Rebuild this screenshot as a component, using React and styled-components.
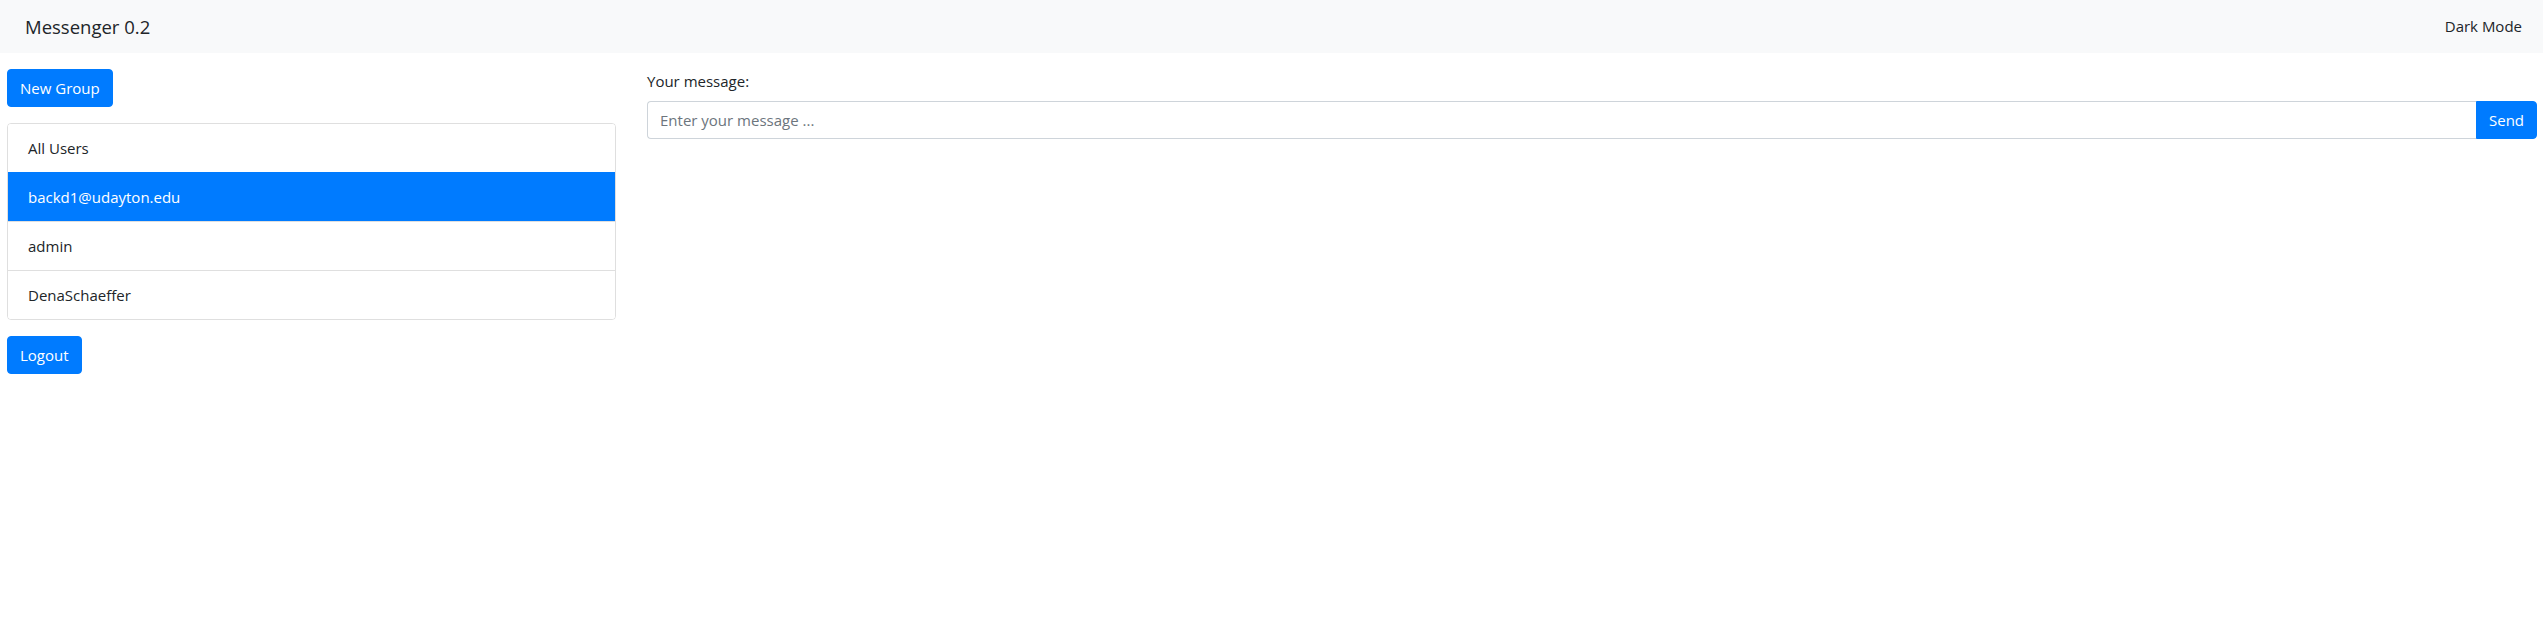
import React from 'react'
import styled, { createGlobalStyle } from 'styled-components'

const GlobalStyle = createGlobalStyle`
  body {
    margin: 0;
    font-family: 'Open Sans', 'Noto Sans', sans-serif;
    font-size: 16px;
    line-height: 1.5;
    color: #212529;
    background: #fff;
  }
  * {
    box-sizing: border-box;
  }
`

const users = ['All Users', 'backd1@udayton.edu', 'admin', 'DenaSchaeffer']

export default function App() {
  return (
    <>
      <GlobalStyle />
      <NavbarStyled>
        <BrandStyled>Messenger 0.2</BrandStyled>
        <NavLinkStyled>Dark Mode</NavLinkStyled>
      </NavbarStyled>
      <MainStyled>
        <SidebarStyled>
          <ButtonStyled>New Group</ButtonStyled>
          <ListStyled>
            {users.map((u) => (
              <ListItemStyled key={u} active={u === 'backd1@udayton.edu'}>
                {u}
              </ListItemStyled>
            ))}
          </ListStyled>
          <ButtonStyled>Logout</ButtonStyled>
        </SidebarStyled>
        <ChatStyled>
          <LabelStyled>Your message:</LabelStyled>
          <InputGroupStyled>
            <InputStyled placeholder="Enter your message ..." />
            <SendButtonStyled>Send</SendButtonStyled>
          </InputGroupStyled>
        </ChatStyled>
      </MainStyled>
    </>
  )
}

const NavbarStyled = styled.nav`
  display: flex;
  align-items: center;
  justify-content: space-between;
  height: 53px;
  padding: 0 21px 0 25px;
  background-color: #f8f9fa;
`

const BrandStyled = styled.span`
  font-size: 18.5px;
  color: #212529;
`

const NavLinkStyled = styled.span`
  font-size: 15px;
  color: #212529;
`

const MainStyled = styled.div`
  display: flex;
  gap: 31px;
  padding: 16px 6px 0 7px;
`

const SidebarStyled = styled.div`
  display: flex;
  flex-direction: column;
  align-items: flex-start;
  gap: 16px;
  width: 609px;
  flex-shrink: 0;
`

const ButtonStyled = styled.button`
  font-family: inherit;
  font-size: 15px;
  line-height: 24px;
  color: #fff;
  background-color: #007bff;
  border: 1px solid #007bff;
  border-radius: 4px;
  padding: 6px 12px;
  cursor: pointer;
`

const ListStyled = styled.div`
  display: flex;
  flex-direction: column;
  width: 100%;
  border: 1px solid rgba(0, 0, 0, 0.125);
  border-radius: 4px;
  overflow: hidden;
`

const ListItemStyled = styled.div`
  font-size: 15px;
  line-height: 24px;
  padding: 12px 20px;
  height: 49px;
  color: ${(p) => (p.active ? '#fff' : '#212529')};
  background-color: ${(p) => (p.active ? '#007bff' : '#fff')};
  border-top: 1px solid ${(p) => (p.active ? '#007bff' : 'rgba(0, 0, 0, 0.125)')};
  &:first-child {
    border-top: none;
    height: 48px;
  }
`

const ChatStyled = styled.div`
  flex: 1;
  display: flex;
  flex-direction: column;
`

const LabelStyled = styled.label`
  font-size: 15px;
  line-height: 24px;
  margin-bottom: 8px;
`

const InputGroupStyled = styled.div`
  display: flex;
  height: 38px;
`

const InputStyled = styled.input`
  flex: 1;
  font-family: inherit;
  font-size: 15px;
  padding: 6px 12px;
  color: #495057;
  border: 1px solid #ced4da;
  border-right: none;
  border-radius: 4px 0 0 4px;
  outline: none;
  &::placeholder {
    color: #6c757d;
  }
`

const SendButtonStyled = styled(ButtonStyled)`
  border-radius: 0 4px 4px 0;
  width: 61px;
  padding: 6px 0;
`
